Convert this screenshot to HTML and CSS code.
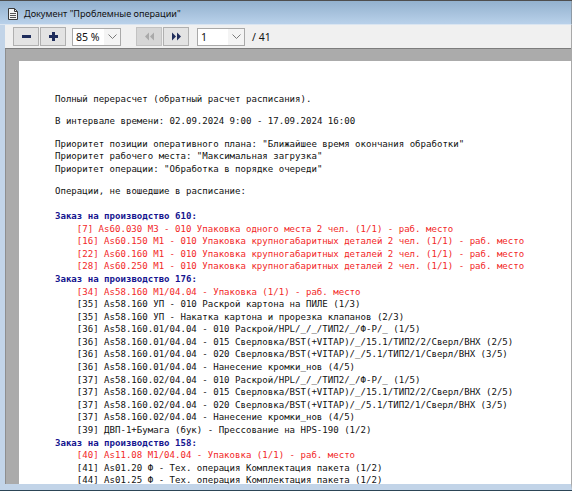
FILE: index.html
```html
<!DOCTYPE html>
<html lang="ru">
<head>
<meta charset="utf-8">
<title>Документ "Проблемные операции"</title>
<link rel="stylesheet" href="styles.css">
</head>
<body>
<div class="window">
  <div class="titlebar">
    <svg class="doc-icon" width="10" height="12" viewBox="0 0 10 12">
      <path d="M0.5 0.5 H6.5 L9.5 3.5 V11.5 H0.5 Z" fill="#f4f4f4" stroke="#3a3a3a"/>
      <path d="M6.5 0.5 V3.5 H9.5" fill="none" stroke="#3a3a3a"/>
      <path d="M2 5.5 H8 M2 7.5 H8 M2 9.5 H8" stroke="#555" stroke-width="1"/>
    </svg>
    <span class="title-text">Документ "Проблемные операции"</span>
  </div>
  <div class="frame">
    <div class="toolbar">
      <div class="btn-group">
        <button class="tbtn" aria-label="Уменьшить">
          <svg width="11" height="11" viewBox="0 0 11 11"><rect x="1" y="4" width="9" height="3" fill="#1f2d5c"/></svg>
        </button>
        <button class="tbtn" aria-label="Увеличить">
          <svg width="11" height="11" viewBox="0 0 11 11"><rect x="1" y="4" width="9" height="3" fill="#1f2d5c"/><rect x="4" y="1" width="3" height="9" fill="#1f2d5c"/></svg>
        </button>
      </div>
      <div class="combo combo-zoom">
        <span class="combo-value">85 %</span>
        <span class="combo-arrow"><svg width="9" height="5" viewBox="0 0 9 5"><path d="M0.5 0.5 L4.5 4.5 L8.5 0.5" fill="none" stroke="#7a7a7a"/></svg></span>
      </div>
      <div class="btn-group nav-group">
        <button class="tbtn disabled" aria-label="Назад">
          <svg width="11" height="9" viewBox="0 0 11 9"><path d="M5 0.5 L1 4.5 L5 8.5 Z M10 0.5 L6 4.5 L10 8.5 Z" fill="#a9a9a9"/></svg>
        </button>
        <button class="tbtn" aria-label="Вперёд">
          <svg width="11" height="9" viewBox="0 0 11 9"><path d="M1 0.5 L5 4.5 L1 8.5 Z M6 0.5 L10 4.5 L6 8.5 Z" fill="#1f2d5c"/></svg>
        </button>
      </div>
      <div class="combo combo-page">
        <span class="combo-value">1</span>
        <span class="combo-arrow"><svg width="9" height="5" viewBox="0 0 9 5"><path d="M0.5 0.5 L4.5 4.5 L8.5 0.5" fill="none" stroke="#7a7a7a"/></svg></span>
      </div>
      <span class="page-total">/ 41</span>
    </div>
    <div class="viewer">
      <div class="page">
        <div class="para line">Полный перерасчет (обратный расчет расписания).</div>
        <div class="para line">В интервале времени: 02.09.2024 9:00 - 17.09.2024 16:00</div>
        <div class="para">
          <div class="line">Приоритет позиции оперативного плана: "Ближайшее время окончания обработки"</div>
          <div class="line">Приоритет рабочего места: "Максимальная загрузка"</div>
          <div class="line">Приоритет операции: "Обработка в порядке очереди"</div>
        </div>
        <div class="para line">Операции, не вошедшие в расписание:</div>
        <div class="orders">
          <div class="order">Заказ на производство 610:</div>
          <div class="item red">[7] As60.030 M3 - 010 Упаковка одного места 2 чел. (1/1) - раб. место</div>
          <div class="item red">[16] As60.150 M1 - 010 Упаковка крупногабаритных деталей 2 чел. (1/1) - раб. место</div>
          <div class="item red">[22] As60.160 M1 - 010 Упаковка крупногабаритных деталей 2 чел. (1/1) - раб. место</div>
          <div class="item red">[28] As60.250 M1 - 010 Упаковка крупногабаритных деталей 2 чел. (1/1) - раб. место</div>
          <div class="order">Заказ на производство 176:</div>
          <div class="item red">[34] As58.160 M1/04.04 - Упаковка (1/1) - раб. место</div>
          <div class="item">[35] As58.160 УП - 010 Раскрой картона на ПИЛЕ (1/3)</div>
          <div class="item">[35] As58.160 УП - Накатка картона и прорезка клапанов (2/3)</div>
          <div class="item">[36] As58.160.01/04.04 - 010 Раскрой/HPL/_/_/ТИП2/_/Ф-Р/_ (1/5)</div>
          <div class="item">[36] As58.160.01/04.04 - 015 Сверловка/BST(+VITAP)/_/15.1/ТИП2/2/Сверл/ВНХ (2/5)</div>
          <div class="item">[36] As58.160.01/04.04 - 020 Сверловка/BST(+VITAP)/_/5.1/ТИП2/1/Сверл/ВНХ (3/5)</div>
          <div class="item">[36] As58.160.01/04.04 - Нанесение кромки_нов (4/5)</div>
          <div class="item">[37] As58.160.02/04.04 - 010 Раскрой/HPL/_/_/ТИП2/_/Ф-Р/_ (1/5)</div>
          <div class="item">[37] As58.160.02/04.04 - 015 Сверловка/BST(+VITAP)/_/15.1/ТИП2/2/Сверл/ВНХ (2/5)</div>
          <div class="item">[37] As58.160.02/04.04 - 020 Сверловка/BST(+VITAP)/_/5.1/ТИП2/1/Сверл/ВНХ (3/5)</div>
          <div class="item">[37] As58.160.02/04.04 - Нанесение кромки_нов (4/5)</div>
          <div class="item">[39] ДВП-1+Бумага (бук) - Прессование на HPS-190 (1/2)</div>
          <div class="order">Заказ на производство 158:</div>
          <div class="item red">[40] As11.08 M1/04.04 - Упаковка (1/1) - раб. место</div>
          <div class="item">[41] As01.20 Ф - Тех. операция Комплектация пакета (1/2)</div>
          <div class="item">[44] As01.25 Ф - Тех. операция Комплектация пакета (1/2)</div>
        </div>
      </div>
    </div>
  </div>
</div>
</body>
</html>
```
FILE: styles.css
```css
* { box-sizing: border-box; }

html, body {
  margin: 0;
  padding: 0;
  width: 572px;
  height: 491px;
  overflow: hidden;
  background: #ffffff;
}

.window {
  width: 572px;
  height: 491px;
  display: flex;
  flex-direction: column;
  border-top: 1px solid #4e4e4e;
  border-bottom: 1px solid #2c4556;
  font-family: "Noto Sans", "Liberation Sans", sans-serif;
}

.titlebar {
  height: 24px;
  flex: none;
  display: flex;
  align-items: center;
  gap: 6px;
  padding: 2px 0 0 8px;
  background: linear-gradient(#93b1ce, #b9d1ea);
  border-bottom: 1px solid #dae5f1;
  border-right: 1px solid #8d9aa6;
}

.doc-icon { flex: none; }

.title-text {
  font-size: 9.1px;
  color: #111;
}

.frame {
  flex: 1;
  min-height: 0;
  display: flex;
  flex-direction: column;
  border-left: 5px solid #c2d4e8;
  border-bottom: 6px solid #c2d4e8;
  border-right: 1px solid #a9a9a9;
}

.toolbar {
  height: 24px;
  flex: none;
  display: flex;
  align-items: center;
  padding: 0 0 0 8px;
  background: #f0f0f0;
  border-bottom: 1px solid #7d7d7d;
}

.btn-group {
  display: flex;
  gap: 1px;
}

.tbtn {
  width: 26px;
  height: 19px;
  padding: 0;
  margin: 0;
  display: flex;
  align-items: center;
  justify-content: center;
  background: #e3e3e3;
  border: 1px solid #b0b0b0;
}

.tbtn.disabled {
  background: #d6d6d6;
  border-color: #c2c2c2;
}

.combo {
  height: 18px;
  display: flex;
  align-items: center;
  background: #ffffff;
  border: 1px solid #a9a9a9;
  font-size: 10.5px;
  color: #111;
}

.combo-value {
  flex: 1;
  padding-left: 3px;
}

.combo-arrow {
  width: 16px;
  height: 100%;
  display: flex;
  align-items: center;
  justify-content: center;
  background: #f4f4f4;
}

.combo-zoom {
  width: 49px;
  margin-left: 6px;
}

.nav-group {
  margin-left: 15px;
}

.combo-page {
  width: 48px;
  margin-left: 8px;
}

.page-total {
  margin-left: 7px;
  font-size: 10.5px;
  color: #111;
}

.viewer {
  flex: 1;
  min-height: 0;
  overflow: hidden;
  background: #ababab;
  border-left: 1px solid #8e8e8e;
  padding: 12px 0 0 13px;
}

.page {
  width: 700px;
  height: 600px;
  background: #ffffff;
  padding: 32px 0 0 36px;
  font-family: "DejaVu Sans Mono", "Liberation Mono", monospace;
  font-size: 9.07px;
  line-height: 12.6px;
  color: #111111;
}

.line,
.order,
.item {
  white-space: pre;
}

.para {
  margin: 0 0 9.8px 0;
}

.orders {
  margin-top: 12px;
}

.order {
  color: #15158f;
  font-weight: bold;
}

.item {
  padding-left: 21.8px;
}

.item.red {
  color: #f22828;
}
```
